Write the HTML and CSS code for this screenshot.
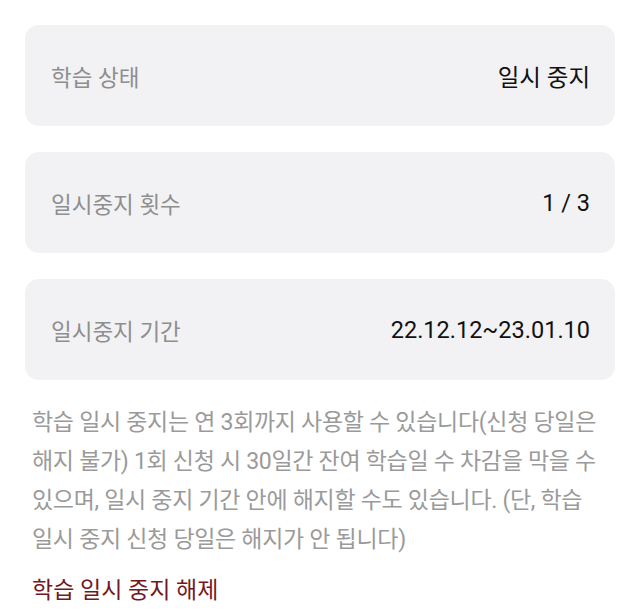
FILE: index.html
```html
<!DOCTYPE html>
<html lang="ko">
  <head>
    <meta charset="UTF-8" />
    <meta name="viewport" content="width=device-width, initial-scale=1.0" />
    <title>학습 일시 중지</title>
    <link rel="stylesheet" href="styles.css">
  </head>
  <body>
    <div class="pause-info">
      <div class="info-row">
        <span class="info-label">학습 상태</span>
        <span class="info-value">일시 중지</span>
      </div>
      <div class="info-row">
        <span class="info-label">일시중지 횟수</span>
        <span class="info-value">1 / 3</span>
      </div>
      <div class="info-row">
        <span class="info-label">일시중지 기간</span>
        <span class="info-value">22.12.12~23.01.10</span>
      </div>
    </div>

    <p class="pause-notice">
      학습 일시 중지는 연 3회까지 사용할 수 있습니다(신청 당일은 해지 불가) 1회 신청 시 30일간 잔여 학습일 수 차감을 막을 수 있으며, 일시 중지 기간 안에 해지할 수도 있습니다. (단, 학습 일시 중지 신청 당일은 해지가 안 됩니다)
    </p>

    <a class="pause-cancel" href="#">학습 일시 중지 해제</a>
  </body>
</html>
```

FILE: styles.css
```css
body {
  font-family: Roboto, "Noto Sans CJK KR", sans-serif;
  background: #fff;
  margin: 0;
  padding: 25px 25px 0;
}

.pause-info {
  display: flex;
  flex-direction: column;
  gap: 26px;
}

.info-row {
  display: flex;
  align-items: center;
  justify-content: space-between;
  height: 101px;
  padding: 0 25px 0 26px;
  background: #f2f2f4;
  border-radius: 14px;
  box-sizing: border-box;
}

.info-label {
  color: #8e8e8e;
  font-size: 22.5px;
}

.info-value {
  color: #111;
  font-size: 23.5px;
}

.pause-notice {
  margin: 23px 8px 0 7px;
  font-size: 23px;
  line-height: 39px;
  color: #9a9a9a;
  letter-spacing: -0.3px;
  word-break: keep-all;
}

.pause-cancel {
  display: block;
  margin: 12px 0 0 7px;
  font-size: 23px;
  color: #731823;
  text-decoration: none;
}
```
